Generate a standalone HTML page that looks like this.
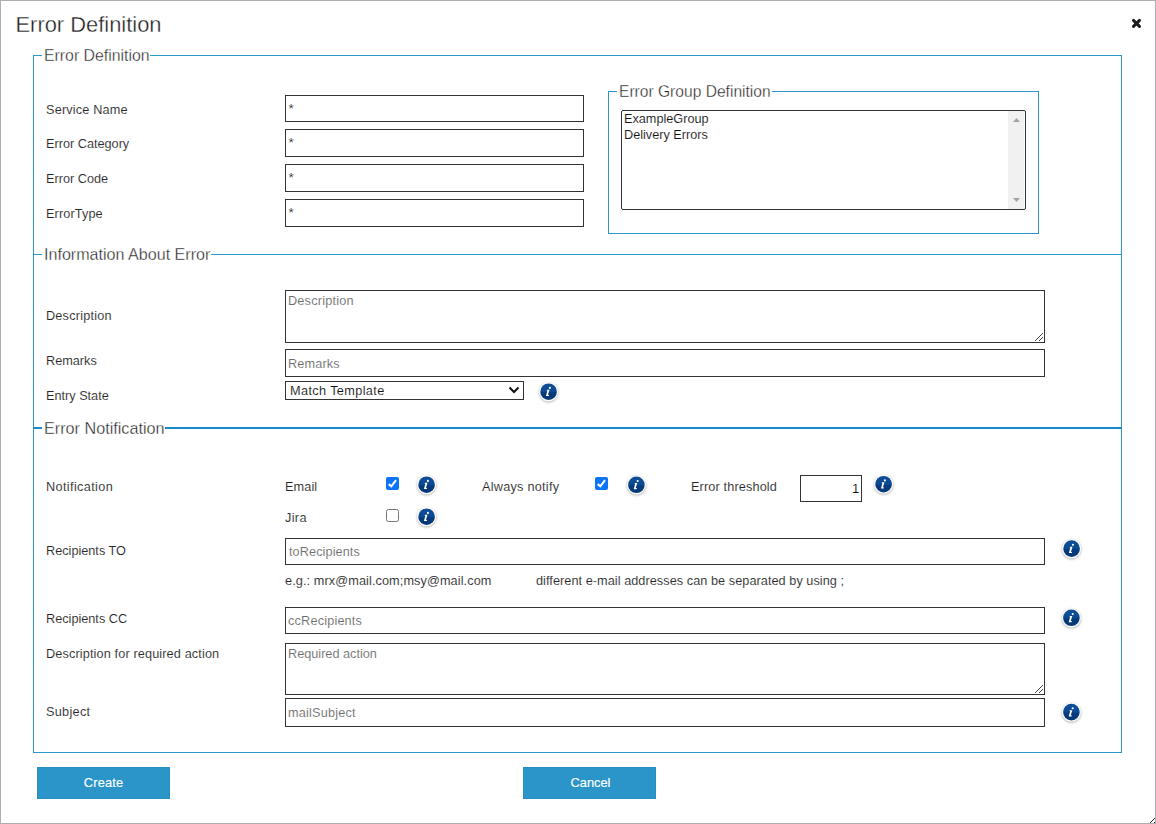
<!DOCTYPE html>
<html><head><meta charset="utf-8"><title>Error Definition</title>
<style>
html,body{margin:0;padding:0;background:#fff;}
body{width:1156px;height:824px;position:relative;overflow:hidden;font-family:"Liberation Sans",sans-serif;}
.t{position:absolute;white-space:pre;-webkit-text-stroke:0.1px #fff;}
.b{position:absolute;box-sizing:border-box;background:#fff;}
.ic{position:absolute;overflow:visible;}
.ln{position:absolute;background:#2b97cc;}
.wh{position:absolute;background:#fff;}
.btn{position:absolute;box-sizing:border-box;background:#2b95ca;border:1px solid #278ec4;color:#fff;text-align:center;}
</style></head><body>
<svg width="0" height="0" style="position:absolute">
<defs>
<linearGradient id="ig" x1="0" y1="0" x2="0" y2="1">
<stop offset="0" stop-color="#104f98"/><stop offset="0.5" stop-color="#0b4a91"/><stop offset="0.56" stop-color="#063a7a"/><stop offset="1" stop-color="#063877"/>
</linearGradient>
<filter id="sh" x="-30%" y="-30%" width="160%" height="160%"><feGaussianBlur stdDeviation="0.8"/></filter>
<g id="info">
<circle cx="0" cy="0.9" r="9.9" fill="#000" opacity="0.26" filter="url(#sh)"/>
<circle cx="0" cy="0" r="9.6" fill="#fbfbfb"/>
<circle cx="0" cy="0" r="8.3" fill="url(#ig)"/>
<path d="M-1.7 -1.9 L0.9 -1.9 L-0.7 3.3 L0.5 3.1 L0.2 4.4 L-2.7 4.4 L-1.2 -1.0 L-1.9 -1.0 Z" fill="#fff"/>
<circle cx="1.3" cy="-3.8" r="1.05" fill="#fff"/>
</g>
</defs></svg>

<div style="position:absolute;left:0;top:0;width:1156px;height:824px;box-sizing:border-box;border:1px solid #b3aeb3;"></div>
<div class="t" style="left:15.5px;top:10px;font-size:21.9px;line-height:30px;color:#1a1a1a;-webkit-text-stroke:0.35px #fff;">Error Definition</div>
<svg class="ic" style="left:1130px;top:17px" width="13" height="13" viewBox="0 0 13 13"><path d="M3.5 3.4 L9.5 9.4 M9.5 3.4 L3.5 9.4" stroke="#1c1c1c" stroke-width="3" stroke-linecap="round"/></svg>
<div class="b" style="left:33px;top:55px;width:1089px;height:698px;border:1px solid #2b97cc;background:transparent;"></div>
<div class="wh" style="left:42px;top:50px;width:108px;height:10px"></div>
<div class="t" style="left:44px;top:46px;font-size:15.85px;line-height:20px;color:#1f1f1f;-webkit-text-stroke:0.32px #fff;paint-order:fill;">Error Definition</div>
<div class="t" style="left:46px;top:100px;font-size:12.7px;line-height:20px;color:#262626;letter-spacing:0.18px;">Service Name</div>
<div class="t" style="left:46px;top:134px;font-size:12.7px;line-height:20px;color:#262626;">Error Category</div>
<div class="t" style="left:46px;top:169px;font-size:12.7px;line-height:20px;color:#262626;">Error Code</div>
<div class="t" style="left:46px;top:204px;font-size:12.7px;line-height:20px;color:#262626;letter-spacing:0.12px;">ErrorType</div>
<div class="b" style="left:285px;top:95px;width:299px;height:27px;border:1px solid #333;"></div>
<div class="t" style="left:288.5px;top:99px;font-size:13.6px;line-height:20px;color:#222;">*</div>
<div class="b" style="left:285px;top:129px;width:299px;height:28px;border:1px solid #333;"></div>
<div class="t" style="left:288.5px;top:133px;font-size:13.6px;line-height:20px;color:#222;">*</div>
<div class="b" style="left:285px;top:164px;width:299px;height:28px;border:1px solid #333;"></div>
<div class="t" style="left:288.5px;top:168px;font-size:13.6px;line-height:20px;color:#222;">*</div>
<div class="b" style="left:285px;top:199px;width:299px;height:28px;border:1px solid #333;"></div>
<div class="t" style="left:288.5px;top:203px;font-size:13.6px;line-height:20px;color:#222;">*</div>
<div class="b" style="left:608px;top:91px;width:431px;height:143px;border:1px solid #2b97cc;background:transparent;"></div>
<div class="wh" style="left:617px;top:86px;width:155px;height:10px"></div>
<div class="t" style="left:619px;top:82px;font-size:15.6px;line-height:20px;color:#1f1f1f;-webkit-text-stroke:0.32px #fff;paint-order:fill;">Error Group Definition</div>
<div class="b" style="left:621px;top:110px;width:405px;height:100px;border:1px solid #333;border-radius:2px;"></div>
<div style="position:absolute;left:1008px;top:111px;width:16px;height:98px;background:#f1f1f1"></div>
<svg class="ic" style="left:1008px;top:111px" width="16" height="98" viewBox="0 0 16 98"><path d="M5 11 L8.5 7 L12 11 Z" fill="#a3a3a3"/><path d="M5 87 L8.5 91 L12 87 Z" fill="#a3a3a3"/></svg>
<div class="t" style="left:624px;top:109px;font-size:12.7px;line-height:20px;color:#111;">ExampleGroup</div>
<div class="t" style="left:624px;top:125px;font-size:12.7px;line-height:20px;color:#111;">Delivery Errors</div>
<div class="ln" style="left:33px;top:254px;width:1089px;height:1px"></div>
<div class="wh" style="left:42px;top:250px;width:169px;height:10px"></div>
<div class="t" style="left:44px;top:244px;font-size:16.1px;line-height:20px;color:#1f1f1f;-webkit-text-stroke:0.32px #fff;paint-order:fill;">Information About Error</div>
<div class="t" style="left:46px;top:306px;font-size:12.7px;line-height:20px;color:#262626;letter-spacing:0.2px;">Description</div>
<div class="t" style="left:46px;top:351px;font-size:12.7px;line-height:20px;color:#262626;">Remarks</div>
<div class="t" style="left:46px;top:386px;font-size:12.7px;line-height:20px;color:#262626;">Entry State</div>
<div class="b" style="left:285px;top:290px;width:760px;height:53px;border:1px solid #333;"></div>
<div class="t" style="left:288px;top:291px;font-size:12.7px;line-height:20px;color:#6c6c6c;letter-spacing:0.2px;">Description</div>
<div class="b" style="left:285px;top:349px;width:760px;height:28px;border:1px solid #333;"></div>
<div class="t" style="left:288px;top:354px;font-size:12.7px;line-height:20px;color:#6c6c6c;letter-spacing:0.15px;">Remarks</div>
<div class="b" style="left:285px;top:381px;width:239px;height:19px;border:1px solid #333;"></div>
<div class="t" style="left:290px;top:381px;font-size:12.7px;line-height:20px;color:#111;letter-spacing:0.38px;">Match Template</div>
<svg class="ic" style="left:508px;top:386px" width="12" height="8" viewBox="0 0 12 8"><path d="M1.5 1.5 L6 6 L10.5 1.5" stroke="#111" stroke-width="2" fill="none"/></svg>
<div class="ln" style="left:33px;top:427px;width:1089px;height:2px;background:#1a8ac6"></div>
<div class="wh" style="left:42px;top:422px;width:123px;height:10px"></div>
<div class="t" style="left:44px;top:418px;font-size:16.2px;line-height:20px;color:#1f1f1f;-webkit-text-stroke:0.32px #fff;paint-order:fill;">Error Notification</div>
<div class="t" style="left:46px;top:477px;font-size:12.7px;line-height:20px;color:#262626;letter-spacing:0.36px;">Notification</div>
<div class="t" style="left:285px;top:477px;font-size:12.7px;line-height:20px;color:#262626;letter-spacing:0.1px;">Email</div>
<svg class="ic" style="left:386px;top:477px" width="13" height="13" viewBox="0 0 13 13"><rect x="0" y="0" width="13" height="13" rx="2" fill="#0b75f9"/><path d="M2.7 7.1 L5.3 9.3 L10.0 3.2" stroke="#fff" stroke-width="2.1" fill="none" stroke-linecap="butt"/></svg>
<div class="t" style="left:285px;top:508px;font-size:12.7px;line-height:20px;color:#262626;letter-spacing:0.35px;">Jira</div>
<svg class="ic" style="left:386px;top:509px" width="13" height="13" viewBox="0 0 13 13"><rect x="0.5" y="0.5" width="12" height="12" rx="2" fill="#fff" stroke="#767676" stroke-width="1"/></svg>
<div class="t" style="left:482px;top:477px;font-size:12.7px;line-height:20px;color:#262626;letter-spacing:0.25px;">Always notify</div>
<svg class="ic" style="left:595px;top:477px" width="13" height="13" viewBox="0 0 13 13"><rect x="0" y="0" width="13" height="13" rx="2" fill="#0b75f9"/><path d="M2.7 7.1 L5.3 9.3 L10.0 3.2" stroke="#fff" stroke-width="2.1" fill="none" stroke-linecap="butt"/></svg>
<div class="t" style="left:691px;top:477px;font-size:12.7px;line-height:20px;color:#262626;letter-spacing:0.14px;">Error threshold</div>
<div class="b" style="left:800px;top:475px;width:62px;height:27px;border:1px solid #333;"></div>
<div class="t" style="left:852px;top:479px;font-size:13px;line-height:20px;color:#111;">1</div>
<div class="t" style="left:46px;top:541px;font-size:12.7px;line-height:20px;color:#262626;">Recipients TO</div>
<div class="b" style="left:285px;top:538px;width:760px;height:27px;border:1px solid #333;"></div>
<div class="t" style="left:289px;top:542px;font-size:12.7px;line-height:20px;color:#6c6c6c;letter-spacing:0.09px;">toRecipients</div>
<div class="t" style="left:285px;top:571px;font-size:12.7px;line-height:20px;color:#262626;letter-spacing:0.1px;">e.g.: mrx@mail.com;msy@mail.com</div>
<div class="t" style="left:536px;top:571px;font-size:12.7px;line-height:20px;color:#262626;letter-spacing:0.055px;">different e-mail addresses can be separated by using ;</div>
<div class="t" style="left:46px;top:609px;font-size:12.7px;line-height:20px;color:#262626;">Recipients CC</div>
<div class="b" style="left:285px;top:607px;width:760px;height:27px;border:1px solid #333;"></div>
<div class="t" style="left:288px;top:611px;font-size:12.7px;line-height:20px;color:#6c6c6c;letter-spacing:0.18px;">ccRecipients</div>
<div class="t" style="left:46px;top:644px;font-size:12.7px;line-height:20px;color:#262626;letter-spacing:0.13px;">Description for required action</div>
<div class="b" style="left:285px;top:643px;width:760px;height:52px;border:1px solid #333;"></div>
<div class="t" style="left:288px;top:644px;font-size:12.7px;line-height:20px;color:#6c6c6c;">Required action</div>
<div class="t" style="left:46px;top:702px;font-size:12.7px;line-height:20px;color:#262626;letter-spacing:0.3px;">Subject</div>
<div class="b" style="left:285px;top:698px;width:760px;height:29px;border:1px solid #333;"></div>
<div class="t" style="left:288px;top:703px;font-size:12.7px;line-height:20px;color:#6c6c6c;letter-spacing:0.2px;">mailSubject</div>
<div class="btn" style="left:37px;top:767px;width:133px;height:32px;"></div>
<div class="t" style="left:37px;top:773px;font-size:12.8px;line-height:20px;color:#fff;letter-spacing:0.15px;width:133px;text-align:center;-webkit-text-stroke:0.15px #fff;">Create</div>
<div class="btn" style="left:523px;top:767px;width:133px;height:32px;"></div>
<div class="t" style="left:524px;top:773px;font-size:12.8px;line-height:20px;color:#fff;width:133px;text-align:center;-webkit-text-stroke:0.15px #fff;">Cancel</div>
<svg style="position:absolute;left:0;top:0;overflow:visible" width="1156" height="824" viewBox="0 0 1156 824"><g fill="#444" shape-rendering="crispEdges"><rect x="1035" y="340" width="1" height="1"/><rect x="1036" y="339" width="1" height="1"/><rect x="1037" y="338" width="1" height="1"/><rect x="1038" y="337" width="1" height="1"/><rect x="1039" y="336" width="1" height="1"/><rect x="1040" y="335" width="1" height="1"/><rect x="1041" y="334" width="1" height="1"/><rect x="1042" y="333" width="1" height="1"/><rect x="1039" y="340" width="1" height="1"/><rect x="1040" y="339" width="1" height="1"/><rect x="1041" y="338" width="1" height="1"/><rect x="1042" y="337" width="1" height="1"/></g><g transform="translate(548.6,391.7)"><use href="#info"/></g><g transform="translate(426.6,484.7)"><use href="#info"/></g><g transform="translate(426.6,516.7)"><use href="#info"/></g><g transform="translate(636.4,484.8)"><use href="#info"/></g><g transform="translate(883.6,484.2)"><use href="#info"/></g><g transform="translate(1071.6,548.6)"><use href="#info"/></g><g transform="translate(1071.4,617.8)"><use href="#info"/></g><g fill="#444" shape-rendering="crispEdges"><rect x="1035" y="692" width="1" height="1"/><rect x="1036" y="691" width="1" height="1"/><rect x="1037" y="690" width="1" height="1"/><rect x="1038" y="689" width="1" height="1"/><rect x="1039" y="688" width="1" height="1"/><rect x="1040" y="687" width="1" height="1"/><rect x="1041" y="686" width="1" height="1"/><rect x="1042" y="685" width="1" height="1"/><rect x="1039" y="692" width="1" height="1"/><rect x="1040" y="691" width="1" height="1"/><rect x="1041" y="690" width="1" height="1"/><rect x="1042" y="689" width="1" height="1"/></g><g transform="translate(1071.4,712.1)"><use href="#info"/></g><g fill="#222" shape-rendering="crispEdges"><rect x="1150" y="822" width="1" height="1"/><rect x="1151" y="821" width="1" height="1"/><rect x="1152" y="820" width="1" height="1"/><rect x="1153" y="819" width="1" height="1"/><rect x="1154" y="818" width="1" height="1"/><rect x="1154" y="822" width="1" height="1"/></g></svg>
</body></html>
